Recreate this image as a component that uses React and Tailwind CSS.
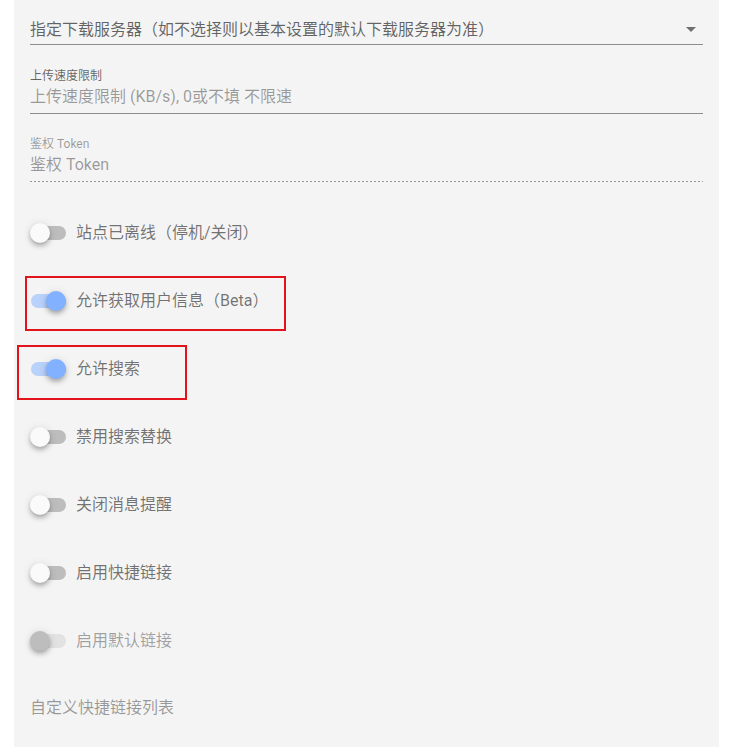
import React from "react";

const font = { fontFamily: 'Roboto, "Noto Sans CJK SC", sans-serif' };

function Switch({ checked, disabled }) {
  let track = "bg-[#bdbdbd]";
  let knob = "bg-[#fafafa] left-0";
  if (checked) {
    track = "bg-[#b9d2fb]";
    knob = "bg-[#82b1ff] left-[16px]";
  } else if (disabled) {
    track = "bg-[#e2e2e2]";
    knob = "bg-[#bdbdbd] left-0";
  }
  return (
    <div className="relative w-[38px] h-[20px] mr-2 shrink-0">
      <div className={`absolute left-[1px] top-[3px] w-[35px] h-[14px] rounded-full ${track}`} />
      <div
        className={`absolute top-0 w-5 h-5 rounded-full shadow-[0_2px_4px_-1px_rgba(0,0,0,0.2),0_4px_5px_0_rgba(0,0,0,0.14),0_1px_10px_0_rgba(0,0,0,0.12)] ${knob}`}
      />
    </div>
  );
}

function SwitchRow({ label, checked, disabled }) {
  return (
    <div className="h-[68px] flex items-center">
      <Switch checked={checked} disabled={disabled} />
      <span
        className={`text-[16px] leading-[24px] ${disabled ? "text-[rgba(0,0,0,0.36)]" : "text-[rgba(0,0,0,0.54)]"}`}
      >
        {label}
      </span>
    </div>
  );
}

export default function App() {
  const rows = [
    { label: "站点已离线（停机/关闭）" },
    { label: "允许获取用户信息（Beta）", checked: true },
    { label: "允许搜索", checked: true },
    { label: "禁用搜索替换" },
    { label: "关闭消息提醒" },
    { label: "启用快捷链接" },
    { label: "启用默认链接", disabled: true },
  ];
  return (
    <div className="relative bg-white min-h-[747px] flex" style={font}>
      <div className="ml-[14px] w-[705px] bg-[#f4f4f4] px-4 min-h-[747px]">
        {/* select */}
        <div className="mt-[13px] h-[32px] flex items-center border-b border-[rgba(0,0,0,0.42)]">
          <span className="flex-1 pt-[2px] text-[16px] leading-[24px] text-[rgba(0,0,0,0.6)]">
            指定下载服务器（如不选择则以基本设置的默认下载服务器为准）
          </span>
          <svg width="24" height="24" viewBox="0 0 24 24" className="shrink-0">
            <path d="M7 10l5 5 5-5z" fill="rgba(0,0,0,0.54)" />
          </svg>
        </div>

        {/* upload limit */}
        <div className="mt-[23px]">
          <div className="text-[12px] leading-[16px] text-[rgba(0,0,0,0.6)]">上传速度限制</div>
          <div className="h-[30px] pt-[1px] border-b border-[rgba(0,0,0,0.42)]">
            <span className="text-[16px] leading-[24px] text-[rgba(0,0,0,0.38)]">
              上传速度限制 (KB/s), 0或不填 不限速
            </span>
          </div>
        </div>

        {/* token */}
        <div className="mt-[21px]">
          <div className="pt-[1px] text-[12px] leading-[16px] text-[rgba(0,0,0,0.38)]">鉴权 Token</div>
          <div className="h-[29px] pt-[1px]">
            <span className="text-[16px] leading-[24px] text-[rgba(0,0,0,0.38)]">鉴权 Token</span>
          </div>
          <div className="h-px bg-[repeating-linear-gradient(to_right,rgba(0,0,0,0.38)_0,rgba(0,0,0,0.38)_2px,transparent_2px,transparent_4px)]" />
        </div>

        {/* switches */}
        <div className="mt-[17px]">
          {rows.map((r) => (
            <SwitchRow key={r.label} {...r} />
          ))}
        </div>

        <div className="mt-[21px] text-[16px] leading-[24px] text-[rgba(0,0,0,0.38)]">
          自定义快捷链接列表
        </div>
      </div>

      {/* annotation boxes */}
      <div className="absolute left-[25px] top-[276px] w-[261px] h-[55px] border-2 border-[#e3131b]" />
      <div className="absolute left-[17px] top-[345px] w-[170px] h-[55px] border-2 border-[#e3131b]" />
    </div>
  );
}
